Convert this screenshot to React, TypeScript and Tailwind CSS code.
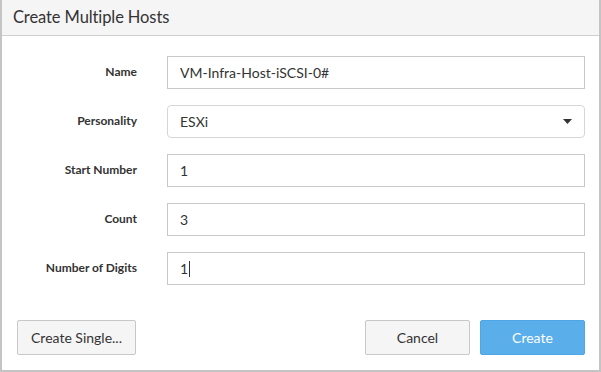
import React from "react";

const rows = [
  { label: "Name", value: "VM-Infra-Host-iSCSI-0#" },
  { label: "Personality", value: "ESXi", select: true },
  { label: "Start Number", value: "1" },
  { label: "Count", value: "3" },
  { label: "Number of Digits", value: "1", caret: true },
];

export default function App() {
  return (
    <div
      className="w-[601px] h-[372px] bg-white flex flex-col border-l-2 border-r-2 border-b-2 border-[#c4c4c4] text-[#333]"
      style={{ fontFamily: "Lato, 'Open Sans', sans-serif" }}
    >
      <div className="h-[36px] shrink-0 bg-[#f5f5f5] border-b border-[#cfcfcf] flex items-center pl-[11px]">
        <span className="text-[16.5px] text-[#333] leading-none tracking-[-0.1px]">Create Multiple Hosts</span>
      </div>
      <div className="flex flex-col gap-[16px] pt-[20px]">
        {rows.map((r) => (
          <div key={r.label} className="flex items-center h-[33px]">
            <div className="w-[135px] text-right text-[12px] font-bold text-[#333] -mt-[2px]">{r.label}</div>
            <div
              className={`ml-[30px] w-[418px] h-[33px] border border-[#c8c8c8] flex items-center pl-[12px] pr-[12px] text-[14px] text-[#333] bg-white ${
                r.select ? "rounded-[4px] border-[#d6d6d6]" : ""
              }`}
            >
              <span className="flex-1 flex items-center">
                {r.value}
                {r.caret ? <span className="inline-block w-[1px] h-[16px] bg-[#333] ml-[1px]" /> : null}
              </span>
              {r.select ? (
                <svg width="9" height="5" viewBox="0 0 9 5">
                  <path d="M0 0 H9 L4.5 5 Z" fill="#333" />
                </svg>
              ) : null}
            </div>
          </div>
        ))}
      </div>
      <div className="flex items-center pt-[35px] pl-[15px] pr-[14px]">
        <button className="w-[119px] h-[35px] bg-[#f5f5f5] border border-[#c8c8c8] rounded-[2px] text-[14px] text-[#333]">
          Create Single...
        </button>
        <div className="flex-1" />
        <button className="w-[105px] h-[35px] bg-[#f5f5f5] border border-[#c8c8c8] rounded-[2px] text-[14px] text-[#333]">
          Cancel
        </button>
        <button className="ml-[10px] w-[105px] h-[35px] bg-[#5aaeea] border border-[#4ea6e6] rounded-[2px] text-[14px] text-white">
          Create
        </button>
      </div>
    </div>
  );
}
